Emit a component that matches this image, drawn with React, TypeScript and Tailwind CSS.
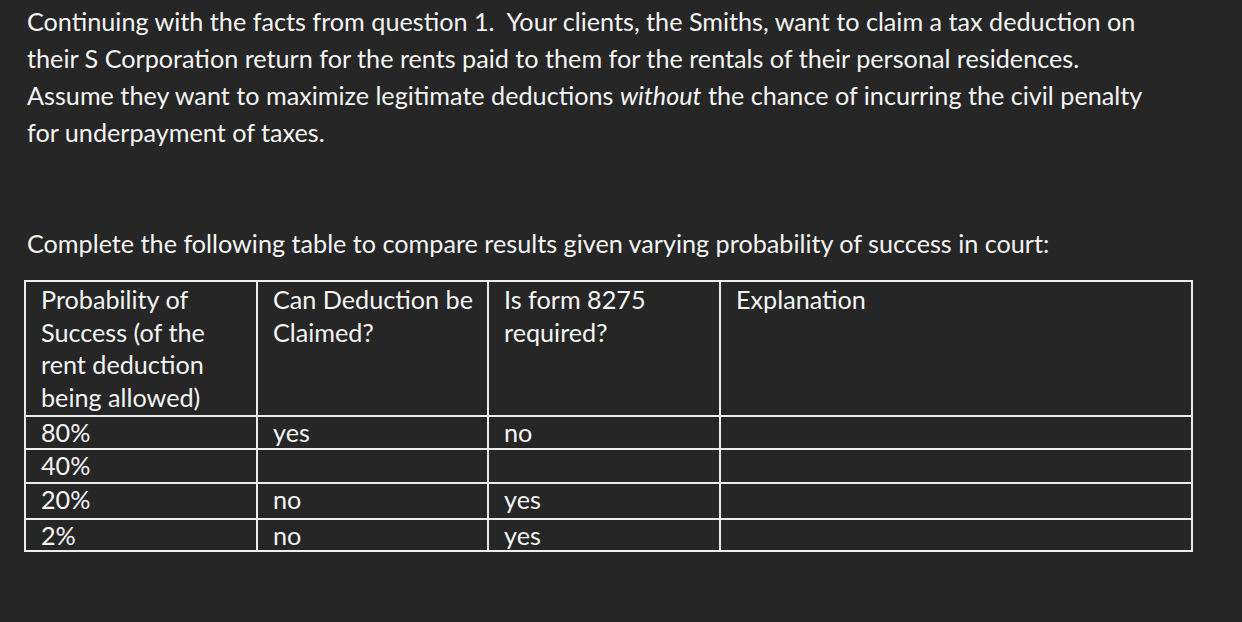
import React from 'react';

const rows = [
  { p: '80%', claim: 'yes', form: 'no', h: 33 },
  { p: '40%', claim: '', form: '', h: 34 },
  { p: '20%', claim: 'no', form: 'yes', h: 36 },
  { p: '2%', claim: 'no', form: 'yes', h: 32 },
];

const cell = 'border-2 border-[#ededed] align-top pl-[15px] pr-1 whitespace-nowrap';

export default function App() {
  return (
    <div
      className="w-[1242px] h-[622px] bg-[#262626] text-[#f4f4f4] overflow-hidden"
      style={{ fontFamily: 'Lato, "Open Sans", sans-serif' }}
    >
      <div className="pl-[27px] pt-[3px] text-[25.2px] leading-[37px] whitespace-nowrap">
        <p>
          Continuing with the facts from question 1.&nbsp; Your clients, the Smiths, want to claim a tax deduction on
          <br />
          their S Corporation return for the rents paid to them for the rentals of their personal residences.
          <br />
          Assume they want to maximize legitimate deductions <i>without</i> the chance of incurring the civil penalty
          <br />
          for underpayment of taxes.
        </p>
        <p className="mt-[74px]">
          Complete the following table to compare results given varying probability of success in court:
        </p>
      </div>

      <table className="ml-[24px] mt-[18px] border-collapse text-[25.2px] leading-[32.5px] table-fixed w-[1169px]">
        <colgroup>
          <col className="w-[232px]" />
          <col className="w-[231px]" />
          <col className="w-[232px]" />
          <col />
        </colgroup>
        <thead>
          <tr className="h-[135px]">
            <th className={`${cell} font-normal text-left pt-[1px]`}>
              Probability of
              <br />
              Success (of the
              <br />
              rent deduction
              <br />
              being allowed)
            </th>
            <th className={`${cell} font-normal text-left pt-[1px]`}>
              Can Deduction be
              <br />
              Claimed?
            </th>
            <th className={`${cell} font-normal text-left pt-[1px]`}>
              Is form 8275
              <br />
              required?
            </th>
            <th className={`${cell} font-normal text-left pt-[1px]`}>Explanation</th>
          </tr>
        </thead>
        <tbody className="leading-[28px]">
          {rows.map((r) => (
            <tr key={r.p} style={{ height: r.h }}>
              <td className={`${cell} pt-[1px]`}>{r.p}</td>
              <td className={`${cell} pt-[1px]`}>{r.claim}</td>
              <td className={`${cell} pt-[1px]`}>{r.form}</td>
              <td className={cell}></td>
            </tr>
          ))}
        </tbody>
      </table>
    </div>
  );
}
